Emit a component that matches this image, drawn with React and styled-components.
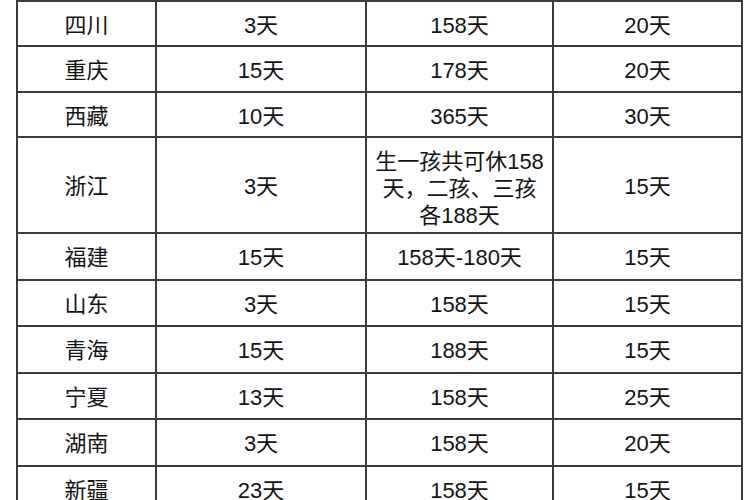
import React from 'react';
import styled, { createGlobalStyle } from 'styled-components';

const GlobalStyle = createGlobalStyle`
  html, body {
    margin: 0;
    padding: 0;
    background: #ffffff;
    overflow: hidden;
  }
`;

const Page = styled.div`
  width: 750px;
  height: 500px;
  padding-left: 16px;
  box-sizing: border-box;
  overflow: hidden;
  background: #ffffff;
`;

const Grid = styled.div`
  display: grid;
  grid-template-columns: 139px 210px 187px 189px;
  grid-template-rows: 45px 46px 45px 96px repeat(6, 46.5px);
  border-left: 2px solid #3b3b3b;
  border-top: 2px solid #3b3b3b;
  width: max-content;
  font-family: "Liberation Sans", "Noto Sans CJK SC", sans-serif;
  font-size: 22px;
  color: #141414;
`;

const Cell = styled.div`
  box-sizing: border-box;
  border-right: 2px solid #3b3b3b;
  border-bottom: 2px solid #3b3b3b;
  display: flex;
  align-items: center;
  justify-content: center;
  text-align: center;
  line-height: ${(p) => (p.$multi ? '27px' : '1')};
  padding-top: ${(p) => (p.$multi ? '6px' : '4px')};
`;

const rows = [
  ['四川', '3天', '158天', '20天'],
  ['重庆', '15天', '178天', '20天'],
  ['西藏', '10天', '365天', '30天'],
  ['浙江', '3天', ['生一孩共可休158', '天，二孩、三孩', '各188天'], '15天'],
  ['福建', '15天', '158天-180天', '15天'],
  ['山东', '3天', '158天', '15天'],
  ['青海', '15天', '188天', '15天'],
  ['宁夏', '13天', '158天', '25天'],
  ['湖南', '3天', '158天', '20天'],
  ['新疆', '23天', '158天', '15天'],
];

export default function App() {
  return (
    <>
      <GlobalStyle />
      <Page>
        <Grid>
          {rows.map((row, i) =>
            row.map((val, j) =>
              Array.isArray(val) ? (
                <Cell key={`${i}-${j}`} $multi>
                  <span>
                    {val.map((line, k) => (
                      <React.Fragment key={k}>
                        {line}
                        {k < val.length - 1 && <br />}
                      </React.Fragment>
                    ))}
                  </span>
                </Cell>
              ) : (
                <Cell key={`${i}-${j}`}>{val}</Cell>
              )
            )
          )}
        </Grid>
      </Page>
    </>
  );
}
